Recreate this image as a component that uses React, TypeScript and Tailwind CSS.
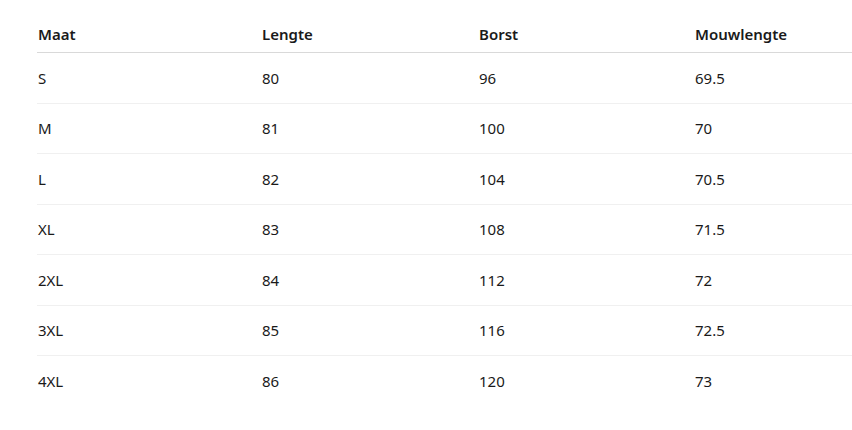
const rows = [
  ["S", "80", "96", "69.5"],
  ["M", "81", "100", "70"],
  ["L", "82", "104", "70.5"],
  ["XL", "83", "108", "71.5"],
  ["2XL", "84", "112", "72"],
  ["3XL", "85", "116", "72.5"],
  ["4XL", "86", "120", "73"],
]

const headers = ["Maat", "Lengte", "Borst", "Mouwlengte"]

export default function App() {
  return (
    <div
      className="w-[852px] h-[430px] overflow-hidden bg-white pt-4 pl-[37px] text-[15px] text-[#1a1a1a]"
      style={{ fontFamily: '"Segoe UI", "Noto Sans", sans-serif' }}
    >
      <div className="w-[815px]">
        <div className="grid grid-cols-[224px_217px_216px_1fr] h-[37px] items-center border-b border-[#d9d9d9] font-semibold">
          {headers.map(h => (
            <div key={h} className="pl-px">{h}</div>
          ))}
        </div>
        {rows.map((r, i) => (
          <div
            key={r[0]}
            className={`grid grid-cols-[224px_217px_216px_1fr] h-[50.5px] items-center ${i < rows.length - 1 ? "border-b border-[#f0f0f0]" : ""}`}
          >
            {r.map((c, j) => (
              <div key={j} className="pl-px">{c}</div>
            ))}
          </div>
        ))}
      </div>
    </div>
  )
}
